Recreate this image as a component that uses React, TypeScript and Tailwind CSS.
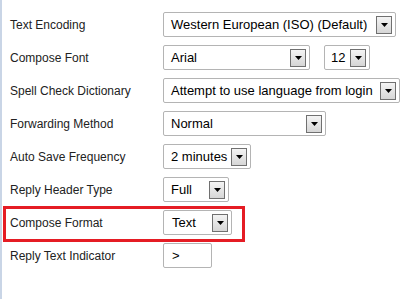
type SelectProps = { value: string; width: string; textPad?: string };

function Arrow() {
  return (
    <span className="flex h-[18px] w-[16px] shrink-0 items-center justify-center border border-[#707070] bg-gradient-to-b from-[#f4f4f4] to-[#d6d6d6]">
      <svg width="7" height="4" viewBox="0 0 7 4">
        <path d="M0 0h7L3.5 4z" fill="#000" />
      </svg>
    </span>
  );
}

function Select({ value, width, textPad = "pl-[7px]" }: SelectProps) {
  return (
    <div
      className={`flex h-[25px] ${width} items-center justify-between rounded-[2px] border border-[#b4b4b4] bg-white pr-[3px] ${textPad} text-[13px] text-black`}
    >
      <span className="whitespace-nowrap">{value}</span>
      <Arrow />
    </div>
  );
}

function Row({ label, children }: { label: string; children: React.ReactNode }) {
  return (
    <div className="flex h-[33px] items-center pl-2">
      <div className="w-[153px] shrink-0 text-[12px] text-[#222]">{label}</div>
      <div className="flex items-center gap-[14px]">{children}</div>
    </div>
  );
}

export default function App() {
  return (
    <div
      className="h-[299px] w-[408px] border-l-2 border-[#c9d5e6] bg-white pt-2"
      style={{ fontFamily: '"Liberation Sans", Arial, sans-serif' }}
    >
      <Row label="Text Encoding">
        <Select value="Western European (ISO) (Default)" width="w-[233px]" />
      </Row>
      <Row label="Compose Font">
        <Select value="Arial" width="w-[147px]" />
        <Select value="12" width="w-[46px]" textPad="pl-[6px]" />
      </Row>
      <Row label="Spell Check Dictionary">
        <Select value="Attempt to use language from login" width="w-[237px]" />
      </Row>
      <Row label="Forwarding Method">
        <Select value="Normal" width="w-[163px]" />
      </Row>
      <Row label="Auto Save Frequency">
        <Select value="2 minutes" width="w-[88px]" />
      </Row>
      <Row label="Reply Header Type">
        <Select value="Full" width="w-[66px]" />
      </Row>
      <div className="relative">
        <Row label="Compose Format">
          <Select value="Text" width="w-[69px]" textPad="pl-[8px]" />
        </Row>
        <div className="pointer-events-none absolute left-[1px] top-0 h-[36px] w-[242px] border-[3px] border-[#e51c24]" />
      </div>
      <Row label="Reply Text Indicator">
        <div className="flex h-[25px] w-[49px] items-center rounded-[2px] border border-[#b4b4b4] bg-white pl-[8px] text-[13px] text-black">
          &gt;
        </div>
      </Row>
    </div>
  );
}
